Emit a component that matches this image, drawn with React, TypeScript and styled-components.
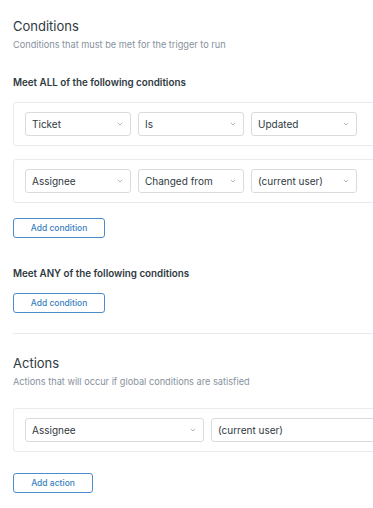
import React from "react";
import styled, { createGlobalStyle } from "styled-components";

const GlobalStyle = createGlobalStyle`
  html, body {
    margin: 0;
    padding: 0;
    background: #ffffff;
    overflow: hidden;
  }
  body {
    font-family: Inter, "Liberation Sans", Arial, sans-serif;
    color: #2f3941;
    -webkit-font-smoothing: antialiased;
  }
`;

const Page = styled.div`
  width: 400px;
  padding: 17px 0 0 13px;
  box-sizing: border-box;
`;

const Section = styled.section`
  display: flex;
  flex-direction: column;
  align-items: flex-start;
`;

const Title = styled.h2<{ $top?: number }>`
  margin: ${(p) => p.$top ?? 0}px 0 0;
  font-size: 13px;
  line-height: 18px;
  font-weight: 400;
  color: #2f3941;
`;

const Subtitle = styled.p`
  margin: 3px 0 0;
  font-size: 9.2px;
  line-height: 14px;
  color: #87929d;
`;

const GroupLabel = styled.h3<{ $top: number }>`
  margin: ${(p) => p.$top}px 0 0;
  font-size: 9.8px;
  line-height: 14px;
  font-weight: 600;
  color: #2f3941;
`;

const Card = styled.div<{ $top: number }>`
  margin-top: ${(p) => p.$top}px;
  align-self: stretch;
  display: flex;
  gap: 7px;
  padding: 9px 11px;
  border: 1px solid #e9ebed;
  border-radius: 3px;
  box-sizing: border-box;
`;

const Select = styled.div<{ $w: number }>`
  width: ${(p) => p.$w}px;
  height: 24px;
  flex: none;
  display: flex;
  align-items: center;
  justify-content: space-between;
  padding: 0 7px 0 6px;
  box-sizing: border-box;
  border: 1px solid #d8dcde;
  border-radius: 3px;
  font-size: 10px;
  color: #2f3941;
`;

const Button = styled.button<{ $w: number; $top: number }>`
  margin-top: ${(p) => p.$top}px;
  width: ${(p) => p.$w}px;
  height: 20px;
  padding: 0;
  background: #fff;
  border: 1px solid #4a8ccc;
  border-radius: 3px;
  color: #3a7fc0;
  font-family: inherit;
  font-size: 8.5px;
  font-weight: 500;
`;

const Divider = styled.hr`
  margin: 20px 0 0;
  border: none;
  border-top: 1px solid #e9ebed;
  width: 100%;
`;

const Chevron = () => (
  <svg width="6" height="4" viewBox="0 0 6 4" fill="none">
    <path d="M0.8 0.8L3 3L5.2 0.8" stroke="#9aa3ab" strokeWidth="0.8" />
  </svg>
);

const Field = ({ label, w, arrow = true }: { label: string; w: number; arrow?: boolean }) => (
  <Select $w={w}>
    <span>{label}</span>
    {arrow && <Chevron />}
  </Select>
);

export default function App() {
  return (
    <>
      <GlobalStyle />
      <Page>
        <Section>
          <Title>Conditions</Title>
          <Subtitle>Conditions that must be met for the trigger to run</Subtitle>
          <GroupLabel $top={24}>Meet ALL of the following conditions</GroupLabel>
          <Card $top={12}>
            <Field label="Ticket" w={106} />
            <Field label="Is" w={106} />
            <Field label="Updated" w={106} />
          </Card>
          <Card $top={13}>
            <Field label="Assignee" w={106} />
            <Field label="Changed from" w={106} />
            <Field label="(current user)" w={106} />
          </Card>
          <Button $w={92} $top={15}>Add condition</Button>
          <GroupLabel $top={29}>Meet ANY of the following conditions</GroupLabel>
          <Button $w={92} $top={12}>Add condition</Button>
          <Divider />
          <Title $top={20}>Actions</Title>
          <Subtitle>Actions that will occur if global conditions are satisfied</Subtitle>
          <Card $top={19}>
            <Field label="Assignee" w={179} />
            <Field label="(current user)" w={179} arrow={false} />
          </Card>
          <Button $w={80} $top={21}>Add action</Button>
        </Section>
      </Page>
    </>
  );
}
